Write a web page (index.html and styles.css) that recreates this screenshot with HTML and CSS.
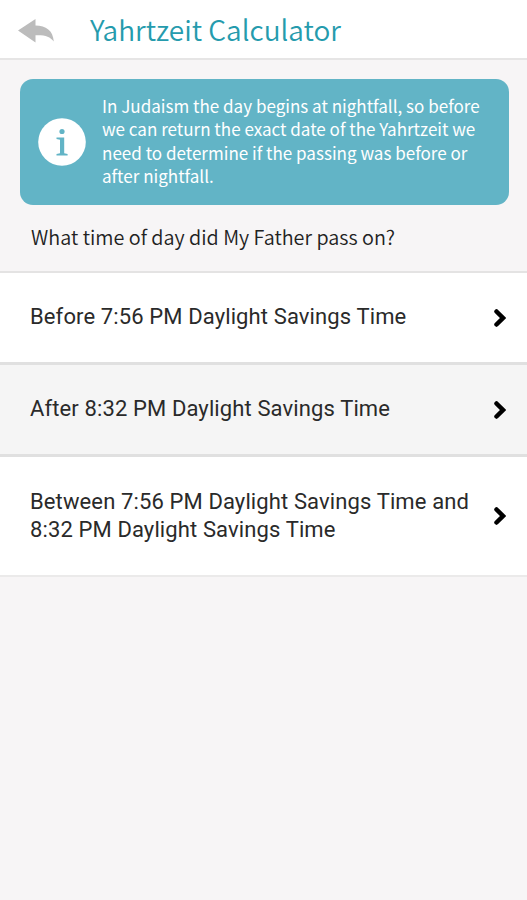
FILE: index.html
```html
<!DOCTYPE html>
<html lang="en">
  <head>
    <meta charset="UTF-8" />
    <meta name="viewport" content="width=device-width, initial-scale=1.0" />
    <title>Yahrtzeit Calculator</title>
    <link rel="stylesheet" href="styles.css">
  </head>
  <body>
    <header class="top-bar">
      <a href="#" class="back" aria-label="Back">
        <svg width="36" height="24" viewBox="0 0 36 24">
          <path d="M0 11.5 L17.5 0 V6.5 C28 6.5 35 11.5 35.8 22.5 C32 17.5 27 15.8 17.5 16.2 V23.5 Z" fill="#bcbcbc" />
        </svg>
      </a>
      <h1>Yahrtzeit Calculator</h1>
    </header>

    <main>
      <div class="info">
        <svg class="info-icon" width="48" height="48" viewBox="0 0 48 48">
          <circle cx="24" cy="24" r="23.8" fill="#fff" />
          <circle cx="24" cy="13.5" r="2.6" fill="#62b4c6" />
          <path d="M18.5 19.5 H26.2 V35.2 L29.6 35.9 V37.4 H18.5 V35.9 L22 35.2 V21.7 L18.5 21 Z" fill="#62b4c6" />
        </svg>
        <p>In Judaism the day begins at nightfall, so before we can return the exact date of the Yahrtzeit we need to determine if the passing was before or after nightfall.</p>
      </div>

      <h2 class="question">What time of day did My Father pass on?</h2>

      <ul class="options">
        <li>
          <a href="#">
            <span>Before 7:56 PM Daylight Savings Time</span>
            <svg class="chevron" width="12" height="18" viewBox="0 0 12 18"><path d="M2.5 2.5 L9 9 L2.5 15.5" /></svg>
          </a>
        </li>
        <li class="alt">
          <a href="#">
            <span>After 8:32 PM Daylight Savings Time</span>
            <svg class="chevron" width="12" height="18" viewBox="0 0 12 18"><path d="M2.5 2.5 L9 9 L2.5 15.5" /></svg>
          </a>
        </li>
        <li class="tall">
          <a href="#">
            <span>Between 7:56 PM Daylight Savings Time and 8:32 PM Daylight Savings Time</span>
            <svg class="chevron" width="12" height="18" viewBox="0 0 12 18"><path d="M2.5 2.5 L9 9 L2.5 15.5" /></svg>
          </a>
        </li>
      </ul>
    </main>
  </body>
</html>
```
FILE: styles.css
```css
* {
  box-sizing: border-box;
}
body {
  margin: 0;
  background-color: #f7f5f6;
  font-family: "Noto Sans CJK SC", "Open Sans", sans-serif;
  color: #222;
}

/* header */
.top-bar {
  display: flex;
  align-items: center;
  height: 60px;
  padding-left: 18px;
  background-color: #fff;
  border-bottom: 2px solid #e6e5e5;
}
.back {
  display: flex;
  width: 72px;
  padding-top: 4px;
}
h1 {
  margin: 0;
  font-size: 28px;
  font-weight: 350;
  line-height: 40px;
  color: #259bad;
}

/* blue info box */
.info {
  display: flex;
  align-items: center;
  height: 126px;
  margin: 19px 18px 0 20px;
  padding: 0 18px;
  background-color: #62b4c6;
  border-radius: 13px;
}
.info-icon {
  flex: none;
  margin-right: 16px;
}
.info p {
  margin: 0;
  padding-bottom: 3px;
  font-size: 17.05px;
  line-height: 23.5px;
  color: #fff;
}

.question {
  margin: 0;
  padding: 16px 31px 0;
  height: 66px;
  font-size: 19.8px;
  font-weight: 350;
  line-height: 32px;
}

/* list of answers */
.options {
  list-style: none;
  margin: 0;
  padding: 0;
  border-top: 2px solid #e4e3e3;
  font-family: Roboto, sans-serif;
  font-size: 22px;
  font-weight: 400;
  line-height: 28px;
  letter-spacing: 0.12px;
}
.options a {
  display: flex;
  align-items: center;
  justify-content: space-between;
  height: 92px;
  padding: 0 21px 0 30px;
  background-color: #fff;
  border-bottom: 3px solid #e0e0e0;
  color: #2a2a2a;
  text-decoration: none;
}
.options .alt a {
  background-color: #f5f5f5;
}
.options .tall a {
  height: 120px;
  border-bottom: 2px solid #ebeaea;
}
.options span {
  width: 450px;
  padding-bottom: 1px;
}
.chevron {
  fill: none;
  stroke: #000;
  stroke-width: 4.5;
  stroke-linecap: round;
}
```
